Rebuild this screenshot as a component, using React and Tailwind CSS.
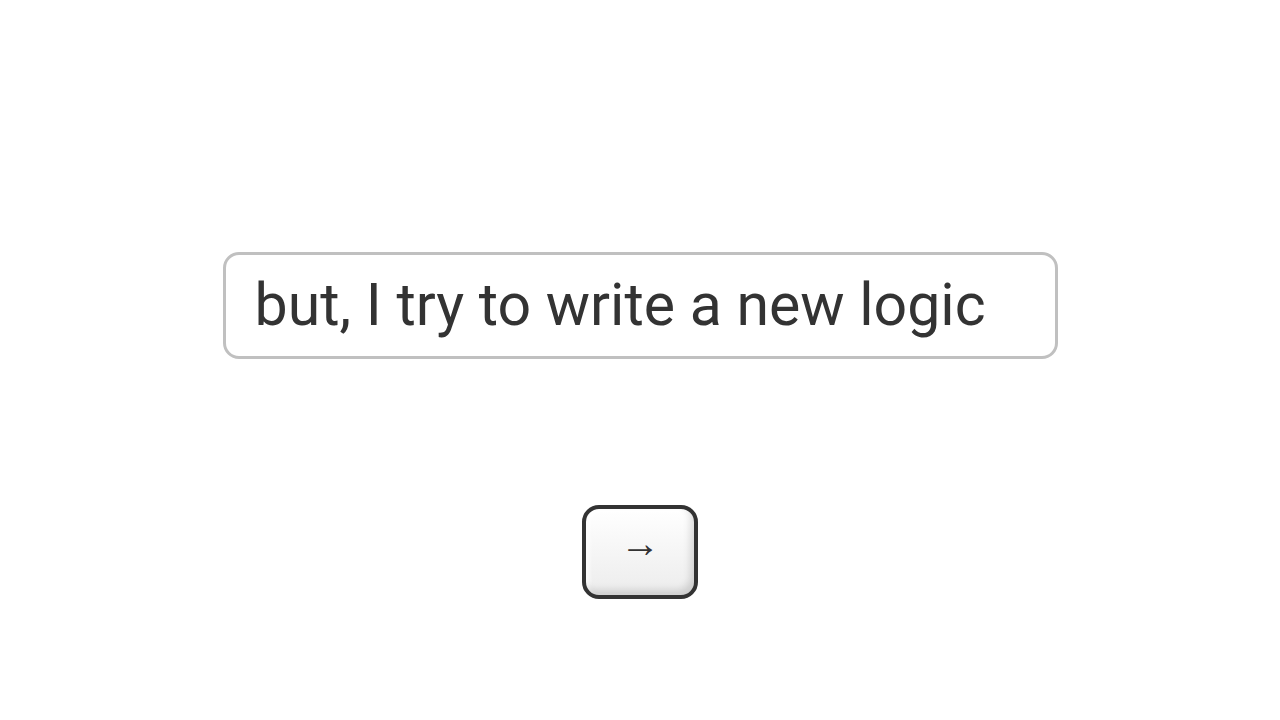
export default function App() {
  return (
    <div className="min-h-screen w-full bg-white flex flex-col items-center pt-[252px]" style={{ fontFamily: 'Roboto, "Noto Sans", sans-serif' }}>
      <div className="w-[835px] h-[107px] border-[3px] border-[#c0c0c0] rounded-[16px] flex items-center pl-[29px]">
        <span className="text-[59px] leading-none text-[#333333] -translate-y-[1px]">but, I try to write a new logic</span>
      </div>
      <button className="mt-[146px] w-[116px] h-[94px] border-[4px] border-[#333333] rounded-[17px] bg-gradient-to-b from-[#ffffff] to-[#ececec] shadow-[inset_-4px_-5px_7px_rgba(0,0,0,0.13),inset_3px_3px_4px_rgba(255,255,255,1)] flex items-center justify-center text-[#333333] text-[40px] leading-none">
        <span className="-translate-y-[9px]" style={{ fontFamily: '"Liberation Sans", sans-serif' }}>→</span>
      </button>
    </div>
  );
}
